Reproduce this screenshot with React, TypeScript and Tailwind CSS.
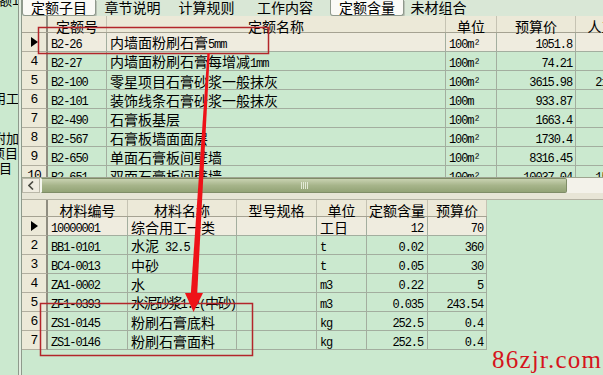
import React from "react";

// mixed CJK / ascii text: ascii in a narrow mono, CJK at 14px
const MONO = "font-[family-name:'Liberation_Mono',monospace] text-[12px] tracking-[-1.1px]";
const CJK = "text-[14px]";
const CJK_TIGHT = "text-[14px] tracking-[-1.6px]";
const CJK_RE = /[\u3000-\u9fff\uff00-\uffef]/;

function Mixed({ s, tight = false }: { s: string; tight?: boolean }) {
  const parts = s.match(/[\u3000-\u9fff\uff00-\uffef]+|[^\u3000-\u9fff\uff00-\uffef]+/g) ?? [];
  return (
    <span className="whitespace-nowrap leading-none">
      {parts.map((p, i) =>
        CJK_RE.test(p) ? (
          <span key={i} className={tight ? CJK_TIGHT : CJK}>
            {p}
          </span>
        ) : (
          <span key={i} className={MONO}>
            {p}
          </span>
        )
      )}
    </span>
  );
}

function Ind({ v }: { v: string }) {
  return (
    <div className="flex w-[26px] shrink-0 items-center justify-center border-b border-r-2 border-b-[#b1ae9f] border-r-[#8f8d80] bg-[#ece9d8]">
      {v === "▶" ? (
        <svg width="7" height="10" viewBox="0 0 7 10">
          <path d="M0 0 L7 5 L0 10 Z" fill="#000" />
        </svg>
      ) : (
        <span className="font-[family-name:'Liberation_Mono',monospace] text-[13px] leading-none tracking-[-1px]">{v}</span>
      )}
    </div>
  );
}

const cell = "flex shrink-0 items-center overflow-hidden border-b border-r border-[#a3ae9f] px-[3px]";
const head = "flex shrink-0 items-center justify-center border-r border-[#c6c3b3] pt-[3px] text-[14px] leading-none whitespace-nowrap";

const quotas = [
  { n: "▶", code: "B2-26", name: "内墙面粉刷石膏5mm", unit: "100m²", price: "1051.8", rg: "" },
  { n: "4", code: "B2-27", name: "内墙面粉刷石膏每增减1mm", unit: "100m²", price: "74.21", rg: "" },
  { n: "5", code: "B2-100", name: "零星项目石膏砂浆一般抹灰", unit: "100m²", price: "3615.98", rg: "2129.74" },
  { n: "6", code: "B2-101", name: "装饰线条石膏砂浆一般抹灰", unit: "100m", price: "933.87", rg: "" },
  { n: "7", code: "B2-490", name: "石膏板基层", unit: "100m²", price: "1663.4", rg: "" },
  { n: "8", code: "B2-567", name: "石膏板墙面面层", unit: "100m²", price: "1730.4", rg: "" },
  { n: "9", code: "B2-650", name: "单面石膏板间壁墙", unit: "100m²", price: "8316.45", rg: "" },
  { n: "10", code: "B2-651", name: "双面石膏板间壁墙", unit: "100m²", price: "10037.04", rg: "1542.30" },
];

const materials = [
  { n: "▶", code: "10000001", name: "综合用工一类", unit: "工日", qty: "12", price: "70" },
  { n: "2", code: "BB1-0101", name: "水泥 32.5", unit: "t", qty: "0.02", price: "360" },
  { n: "3", code: "BC4-0013", name: "中砂", unit: "t", qty: "0.05", price: "30" },
  { n: "4", code: "ZA1-0002", name: "水", unit: "m3", qty: "0.22", price: "5" },
  { n: "5", code: "ZF1-0393", name: "水泥砂浆1:2(中砂)", unit: "m3", qty: "0.035", price: "243.54" },
  { n: "6", code: "ZS1-0145", name: "粉刷石膏底料", unit: "kg", qty: "252.5", price: "0.4" },
  { n: "7", code: "ZS1-0146", name: "粉刷石膏面料", unit: "kg", qty: "252.5", price: "0.4" },
];

const tabs = [
  { label: "定额子目", w: "w-[74px]", on: true },
  { label: "章节说明", w: "w-[73px]", on: false },
  { label: "计算规则", w: "w-[75px]", on: false },
  { label: "工作内容", w: "w-[82px] mr-[4px]", on: false },
  { label: "定额含量", w: "w-[74px]", on: true },
  { label: "未材组合", w: "w-[69px]", on: false },
];

export default function App() {
  return (
    <div className="relative flex h-[375px] w-[603px] overflow-hidden bg-[#cbe9cf] font-[family-name:'Noto_Sans_CJK_SC',sans-serif] text-black">
      {/* left panel, mostly cut off */}
      <div className="w-[19px] shrink-0 overflow-hidden border-r border-[#8e9a8c] text-[13px] leading-[15px]">
        <div className="-ml-[1px] -mt-[8px] whitespace-nowrap">
          额<span className={MONO}>1</span>
        </div>
        <div className="-ml-[7px] mt-[80px] whitespace-nowrap">用工程</div>
        <div className="-ml-[7px] mt-[25px] whitespace-nowrap">附加费</div>
        <div className="-ml-[8px] whitespace-nowrap">项目</div>
        <div className="-ml-[14px] whitespace-nowrap">子目</div>
      </div>
      <div className="w-[3px] shrink-0 border-r border-[#8e9a8c] bg-[#e2ede0]" />

      <div className="flex w-[581px] shrink-0 flex-col">
        {/* tabs */}
        <div className="flex h-[16px] shrink-0 bg-[#d9e7d6]">
          {tabs.map((t) => (
            <div
              key={t.label}
              className={
                t.on
                  ? `${t.w} flex shrink-0 items-center justify-center rounded-b-[3px] border border-t-0 border-[#8f998c] bg-[#fafaf6] pb-[2px] text-[14px] leading-none shadow-[1px_1px_0_#b9c2b6]`
                  : `${t.w} flex shrink-0 items-center justify-center pb-[2px] text-[14px] leading-none`
              }
            >
              {t.label}
            </div>
          ))}
        </div>

        {/* quota grid */}
        <div className="h-[161px] shrink-0 overflow-hidden">
          <div className="flex h-[17px] border-b border-[#a5a292] bg-[#ece9d8]">
            <div className="w-[26px] shrink-0 border-r-2 border-[#8f8d80]" />
            <div className={`${head} w-[59px]`}>定额号</div>
            <div className={`${head} w-[339px]`}>定额名称</div>
            <div className={`${head} w-[51px]`}>单位</div>
            <div className={`${head} w-[79px]`}>预算价</div>
            <div className={`${head} w-[66px]`}>人工费</div>
          </div>
          {quotas.map((r, i) => (
            <div key={r.code} className={i === 0 ? "flex h-[19px] bg-[#efecdf]" : "flex h-[19px]"}>
              <Ind v={r.n} />
              <div className={`${cell} w-[59px]`}>
                <Mixed s={r.code} />
              </div>
              <div className={`${cell} w-[339px]`}>
                <Mixed s={r.name} />
              </div>
              <div className={`${cell} w-[51px]`}>
                <Mixed s={r.unit} />
              </div>
              <div className={`${cell} w-[79px] justify-end`}>
                <Mixed s={r.price} />
              </div>
              <div className={`${cell} w-[66px] justify-end`}>
                <Mixed s={r.rg} />
              </div>
            </div>
          ))}
        </div>

        {/* horizontal scrollbar */}
        <div className="flex h-[16px] shrink-0 border-t border-[#9ea48f] bg-[#f3f2ea]">
          <div className="flex w-[18px] shrink-0 items-center justify-center border border-[#b9b7a8] bg-[#efece0]">
            <svg width="6" height="9" viewBox="0 0 6 9">
              <path d="M5 0.5 L1 4.5 L5 8.5" fill="none" stroke="#4a4a42" strokeWidth="1.6" />
            </svg>
          </div>
          <div className="flex w-[527px] shrink-0 items-center justify-center gap-[1px] rounded-[2px] border border-l-2 border-[#7f8d67] border-l-[#f4f6ee] bg-linear-to-b from-[#c8d2b1] via-[#a6b48a] to-[#93a376]">
            <span className="h-[7px] w-[1px] bg-[#e3e9d6]" />
            <span className="h-[7px] w-[1px] bg-[#e3e9d6]" />
            <span className="h-[7px] w-[1px] bg-[#e3e9d6]" />
            <span className="h-[7px] w-[1px] bg-[#e3e9d6]" />
          </div>
          <div className="flex-1" />
        </div>

        {/* splitter */}
        <div className="h-[7px] shrink-0 border-b border-[#b3b1a2] bg-[#e7e5d6]" />

        {/* material grid */}
        <div className="w-[465px] shrink-0">
          <div className="flex h-[17px] border-b border-[#a5a292] bg-[#ece9d8]">
            <div className="w-[26px] shrink-0 border-r-2 border-[#8f8d80]" />
            <div className={`${head} w-[80px]`}>材料编号</div>
            <div className={`${head} w-[109px]`}>材料名称</div>
            <div className={`${head} w-[80px]`}>型号规格</div>
            <div className={`${head} w-[50px]`}>单位</div>
            <div className={`${head} w-[61px]`}>定额含量</div>
            <div className={`${head} w-[59px]`}>预算价</div>
          </div>
          {materials.map((r, i) => (
            <div key={r.code} className={i === 0 ? "flex h-[19px] bg-[#efecdf]" : "flex h-[19px]"}>
              <Ind v={r.n} />
              <div className={`${cell} w-[80px]`}>
                <Mixed s={r.code} />
              </div>
              <div className={`${cell} w-[109px]`}>
                <Mixed s={r.name} tight={r.name.length > 10} />
              </div>
              <div className={`${cell} w-[80px]`} />
              <div className={`${cell} w-[50px]`}>
                <Mixed s={r.unit} />
              </div>
              <div className={`${cell} w-[61px] justify-end pr-[4px]`}>
                <Mixed s={r.qty} />
              </div>
              <div className={`${cell} w-[59px] justify-end`}>
                <Mixed s={r.price} />
              </div>
            </div>
          ))}
        </div>
      </div>

      {/* annotations drawn over the screenshot */}
      <svg className="pointer-events-none absolute left-0 top-0" width="603" height="375" viewBox="0 0 603 375">
        <rect x="38.5" y="27.5" width="230" height="26" fill="none" stroke="#b3262b" strokeWidth="1.5" />
        <rect x="40.5" y="303.5" width="212" height="52" fill="none" stroke="#b3262b" strokeWidth="1.5" />
        <polygon points="207.4,53 209.8,53 197.2,294 190.8,294" fill="#ee1218" />
        <polygon points="185,293 203,293 193.5,312" fill="#ee1218" />
      </svg>
      <div className="absolute left-[492px] top-[347px] font-[family-name:'Liberation_Serif',serif] text-[25px] leading-[25px] tracking-[1.2px] text-[#d6141c]">
        86zjr.com
      </div>
    </div>
  );
}
